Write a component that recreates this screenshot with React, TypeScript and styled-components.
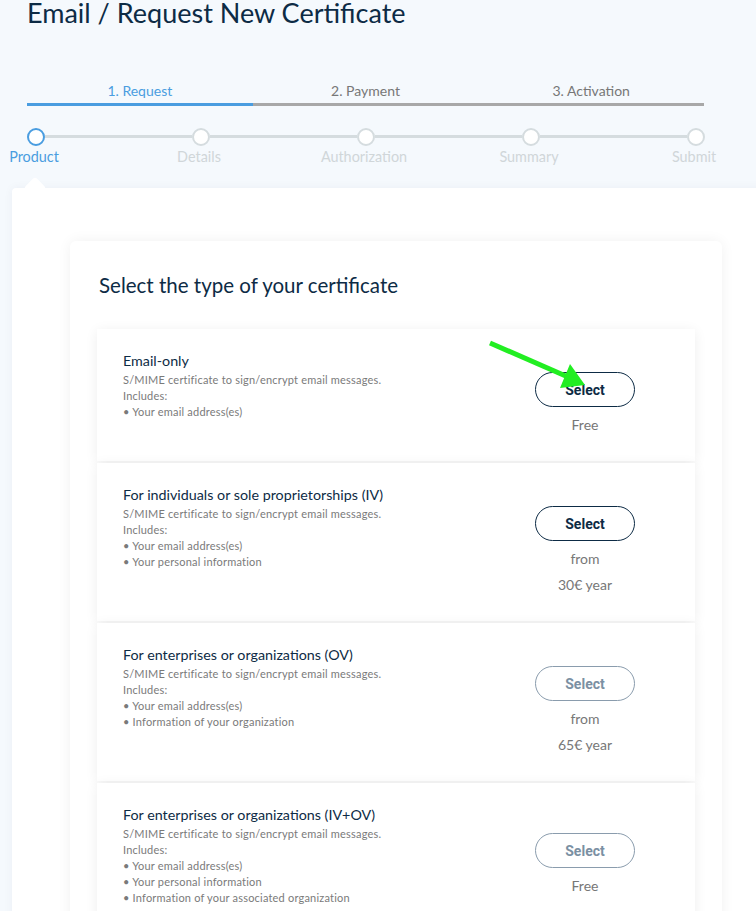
import {FC, Fragment} from 'react';
import styled, {createGlobalStyle} from 'styled-components';

const GlobalStyle = createGlobalStyle`
  html, body {
    margin: 0;
    padding: 0;
    overflow: hidden;
    background: #f5f9fd;
    font-family: Lato, "Open Sans", sans-serif;
  }
`;

const Page = styled.div`
  position: relative;
  width: 756px;
  height: 911px;
  overflow: hidden;
`;

const Header = styled.div`
  padding-left: 27px;
  width: 678px;
`;

const Title = styled.h1`
  margin: 0;
  font-size: 27px;
  line-height: 25px;
  font-weight: 400;
  color: #0d2b45;
`;

const Tabs = styled.div`
  display: grid;
  grid-template-columns: repeat(3, 1fr);
  width: 677px;
  margin-top: 56px;
`;

const Tab = styled.div<{ $active?: boolean }>`
  text-align: center;
  font-size: 14px;
  line-height: 20px;
  color: ${p => p.$active ? '#4a9de0' : '#777'};
  padding-bottom: 2px;
  border-bottom: 3px solid ${p => p.$active ? '#4a9de0' : '#a8a8a8'};
`;

const Steps = styled.div`
  display: flex;
  align-items: flex-start;
  margin-top: 22px;
  width: 678px;
`;

const Step = styled.div`
  width: 18px;
  display: flex;
  flex-direction: column;
  align-items: center;
`;

const Dot = styled.div<{ $active?: boolean }>`
  box-sizing: border-box;
  width: 18px;
  height: 18px;
  border-radius: 50%;
  background: #fff;
  border: 2px solid ${p => p.$active ? '#4a9de0' : '#d5dcdf'};
`;

const StepLabel = styled.div<{ $active?: boolean }>`
  margin: 1px 4px 0 0;
  font-size: 14.4px;
  line-height: 20px;
  white-space: nowrap;
  color: ${p => p.$active ? '#4a9de0' : '#d0d6d9'};
`;

const Connector = styled.div`
  flex: 1;
  height: 3px;
  margin-top: 7px;
  background: #d5dcdf;
`;

const Panel = styled.div`
  position: relative;
  margin: 21px 0 0 12px;
  width: 800px;
  min-height: 800px;
  box-sizing: border-box;
  padding: 53px 0 40px 58px;
  background: #fff;
  border-radius: 4px;
  box-shadow: 0 0 10px rgba(20, 40, 80, 0.05);
`;

const Notch = styled.div`
  position: absolute;
  left: 15px;
  top: -8px;
  width: 16px;
  height: 16px;
  background: #fff;
  border-radius: 3px;
  transform: rotate(45deg);
`;

const Card = styled.div`
  width: 652px;
  box-sizing: border-box;
  padding: 32px 27px;
  background: #fff;
  border-radius: 6px;
  box-shadow: 0 0 14px rgba(0, 0, 0, 0.06);
`;

const Heading = styled.h2`
  margin: 0 0 32px 2px;
  font-size: 20.5px;
  line-height: 24px;
  font-weight: 400;
  color: #0d2b45;
`;

const OptionList = styled.div`
  display: flex;
  flex-direction: column;
  gap: 2px;
`;

const Option = styled.div`
  display: flex;
  align-items: flex-start;
  padding: 22px 60px 23px 26px;
  background: #fff;
  box-shadow: 0 2px 12px rgba(0, 0, 0, 0.07);
`;

const OptionInfo = styled.div`
  flex: 1;
`;

const OptionTitle = styled.div`
  font-size: 14.3px;
  line-height: 20px;
  color: #0d2b45;
`;

const OptionText = styled.div`
  margin-top: 1px;
  font-size: 11px;
  line-height: 16px;
  letter-spacing: 0.2px;
  color: #7a7a7a;
`;

const OptionSide = styled.div`
  align-self: center;
  width: 100px;
  margin-top: 21px;
  text-align: center;
`;

const SelectButton = styled.button<{ $disabled?: boolean }>`
  box-sizing: border-box;
  display: block;
  width: 100px;
  height: 35px;
  border-radius: 18px;
  background: #fff;
  border: 1px solid ${p => p.$disabled ? '#8a9cad' : '#0d2b45'};
  color: ${p => p.$disabled ? '#7b90a3' : '#0d2b45'};
  font-family: Roboto, "Liberation Sans", sans-serif;
  font-weight: 700;
  font-size: 14px;
  cursor: pointer;
`;

const Price = styled.div`
  margin-top: 5px;
  font-size: 14px;
  line-height: 26px;
  color: #777;
`;

const Arrow = styled.svg`
  position: absolute;
  left: 0;
  top: 0;
  pointer-events: none;
`;

interface CertOption {
    title: string;
    items: string[];
    price: string[];
    disabled?: boolean;
}

const options: CertOption[] = [
    {title: 'Email-only', items: ['Your email address(es)'], price: ['Free']},
    {title: 'For individuals or sole proprietorships (IV)', items: ['Your email address(es)', 'Your personal information'], price: ['from', '30€ year']},
    {title: 'For enterprises or organizations (OV)', items: ['Your email address(es)', 'Information of your organization'], price: ['from', '65€ year'], disabled: true},
    {title: 'For enterprises or organizations (IV+OV)', items: ['Your email address(es)', 'Your personal information', 'Information of your associated organization'], price: ['Free'], disabled: true},
];

const steps = ['Product', 'Details', 'Authorization', 'Summary', 'Submit'];

const App: FC = () => {
    return (
        <Page>
            <GlobalStyle />
            <Header>
                <Title>Email / Request New Certificate</Title>
                <Tabs>
                    <Tab $active>1. Request</Tab>
                    <Tab>2. Payment</Tab>
                    <Tab>3. Activation</Tab>
                </Tabs>
                <Steps>
                    {steps.map((s, i) => (
                        <Fragment key={s}>
                            {i > 0 && <Connector />}
                            <Step>
                                <Dot $active={i === 0} />
                                <StepLabel $active={i === 0}>{s}</StepLabel>
                            </Step>
                        </Fragment>
                    ))}
                </Steps>
            </Header>
            <Panel>
                <Notch />
                <Card>
                    <Heading>Select the type of your certificate</Heading>
                    <OptionList>
                        {options.map(o => (
                            <Option key={o.title}>
                                <OptionInfo>
                                    <OptionTitle>{o.title}</OptionTitle>
                                    <OptionText>
                                        <div>S/MIME certificate to sign/encrypt email messages.</div>
                                        <div>Includes:</div>
                                        {o.items.map(it => <div key={it}>• {it}</div>)}
                                    </OptionText>
                                </OptionInfo>
                                <OptionSide>
                                    <SelectButton $disabled={o.disabled}>Select</SelectButton>
                                    <Price>
                                        {o.price.map(p => <div key={p}>{p}</div>)}
                                    </Price>
                                </OptionSide>
                            </Option>
                        ))}
                    </OptionList>
                </Card>
            </Panel>
            <Arrow width="756" height="911" viewBox="0 0 756 911">
                <line x1="490" y1="343" x2="568" y2="377" stroke="#22ee22" strokeWidth="5" />
                <polygon points="585,385 570,364 560,388" fill="#22ee22" />
            </Arrow>
        </Page>
    );
};

export default App;
